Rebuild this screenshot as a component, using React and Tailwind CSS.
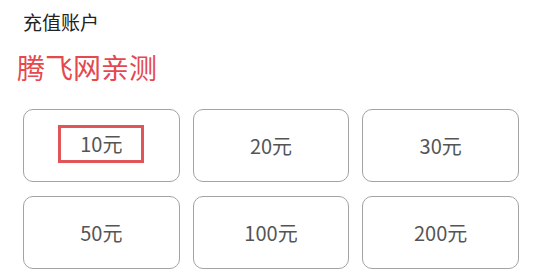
import React from 'react';

const amounts = ['10元', '20元', '30元', '50元', '100元', '200元'];

export default function App() {
  return (
    <div
      className="w-[550px] h-[275px] bg-white overflow-hidden pl-[23px] pr-[31px]"
      style={{ fontFamily: '"Noto Sans CJK SC", "Noto Sans", sans-serif' }}
    >
      <div className="pt-[9px] text-[19px] leading-[26px] text-[#222]">充值账户</div>
      <div className="mt-[14px] ml-[-6px] text-[28px] leading-[36px] text-[#e5484d]">腾飞网亲测</div>

      <div className="mt-[24px] grid grid-cols-3 gap-x-[13px] gap-y-[14px]">
        {amounts.map((a, i) => (
          <div
            key={a}
            className="h-[73px] rounded-[10px] border border-[#a3a3a3] flex items-center justify-center text-[20px] text-[#555]"
          >
            {i === 0 ? (
              <span className="w-[86px] h-[38px] mb-[3px] border-[3px] border-[#e05558] flex items-center justify-center">
                {a}
              </span>
            ) : (
              <span>{a}</span>
            )}
          </div>
        ))}
      </div>
    </div>
  );
}
